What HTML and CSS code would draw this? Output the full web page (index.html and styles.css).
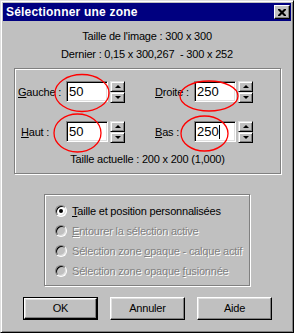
FILE: index.html
```html
<!DOCTYPE html>
<html lang="fr">
<head>
<meta charset="utf-8">
<title>Sélectionner une zone</title>
<link rel="stylesheet" href="styles.css">
</head>
<body>
<div class="window">
  <div class="titlebar">
    <span class="title">Sélectionner une zone</span>
    <span class="close"><svg width="8" height="7" viewBox="0 0 8 7"><path d="M0 0h2l2 2 2-2h2v1L5.5 3.5 8 6v1H6L4 5 2 7H0V6l2.5-2.5L0 1z" fill="#000"/></svg></span>
  </div>
  <div class="info first">Taille de l'image : 300 x 300</div>
  <div class="info second">Dernier : 0,15 x 300,267&nbsp; - 300 x 252</div>

  <div class="group group-size">
    <div class="fields">
      <div class="field">
        <span class="label label-w1"><u>G</u>auche :</span>
        <span class="edit">50</span>
        <span class="spin"><span class="sbtn"><i class="up"></i></span><span class="sbtn"><i class="down"></i></span></span>
      </div>
      <div class="field">
        <span class="label label-w2"><u>D</u>roite :</span>
        <span class="edit">250</span>
        <span class="spin"><span class="sbtn"><i class="up"></i></span><span class="sbtn"><i class="down"></i></span></span>
      </div>
      <div class="field">
        <span class="label label-w1 indent"><u>H</u>aut :</span>
        <span class="edit">50</span>
        <span class="spin"><span class="sbtn"><i class="up"></i></span><span class="sbtn"><i class="down"></i></span></span>
      </div>
      <div class="field">
        <span class="label label-w2"><u>B</u>as :</span>
        <span class="edit">250<span class="caret"></span></span>
        <span class="spin"><span class="sbtn"><i class="up"></i></span><span class="sbtn"><i class="down"></i></span></span>
      </div>
    </div>
    <div class="current">Taille actuelle : 200 x 200 (1,000)</div>
  </div>

  <div class="group group-mode">
    <div class="radio-row"><span class="radio checked"></span><span><u>T</u>aille et position personnalisées</span></div>
    <div class="radio-row disabled"><span class="radio"></span><span><u>E</u>ntourer la sélection active</span></div>
    <div class="radio-row disabled"><span class="radio"></span><span>Sélection zone <u>o</u>paque - calque actif</span></div>
    <div class="radio-row disabled"><span class="radio"></span><span>Sélection zone opaque <u>f</u>usionnée</span></div>
  </div>

  <div class="buttons">
    <span class="button default"><span class="btn-inner">OK</span></span>
    <span class="button"><span class="btn-inner">Annuler</span></span>
    <span class="button"><span class="btn-inner">Aide</span></span>
  </div>

  <svg class="marks" width="294" height="333" viewBox="0 0 294 333">
    <ellipse cx="82" cy="93" rx="27" ry="18.5"/>
    <ellipse cx="77.5" cy="133" rx="23.5" ry="19"/>
    <ellipse cx="209" cy="96" rx="29" ry="15"/>
    <ellipse cx="204.5" cy="133.5" rx="23.5" ry="17.5"/>
  </svg>
</div>
</body>
</html>
```

FILE: styles.css
```css
html, body {
  margin: 0;
  padding: 0;
  background: #c0c0c0;
}

.window {
  position: relative;
  box-sizing: border-box;
  width: 294px;
  height: 333px;
  background: #c0c0c0;
  border: 1px solid;
  border-color: #dfdfdf #000 #000 #dfdfdf;
  box-shadow: inset 1px 1px #fff, inset -1px -1px #808080;
  padding: 2px;
  display: flex;
  flex-direction: column;
  font-family: "Liberation Sans", Arial, sans-serif;
  font-size: 11px;
  letter-spacing: -0.2px;
  color: #000;
}

.titlebar {
  height: 18px;
  background: #000080;
  display: flex;
  align-items: center;
  justify-content: space-between;
  padding: 0 1px 0 3px;
  color: #fff;
  font-weight: bold;
  font-size: 12px;
}

.title {
  letter-spacing: 0.2px;
}

.close {
  box-sizing: border-box;
  width: 16px;
  height: 14px;
  background: #c0c0c0;
  border: 1px solid;
  border-color: #fff #000 #000 #fff;
  box-shadow: inset -1px -1px #808080;
  display: flex;
  align-items: center;
  justify-content: center;
  padding-right: 1px;
}

.info {
  text-align: center;
  line-height: 13px;
}

.info.first {
  margin-top: 9px;
}

.info.second {
  margin-top: 5px;
}

.group {
  border: 1px solid #808080;
  box-shadow: inset 1px 1px #fff, 1px 1px #fff;
}

.group-size {
  width: 267px;
  box-sizing: border-box;
  margin: 7px 0 0 11px;
  padding: 12px 0 7px 3px;
}

.fields {
  display: grid;
  grid-template-columns: auto auto;
  justify-content: start;
  column-gap: 30px;
  row-gap: 18px;
}

.field {
  display: flex;
  align-items: flex-start;
  height: 22px;
}

.label {
  align-self: center;
  line-height: 13px;
  white-space: nowrap;
}

.label-w1 {
  width: 48px;
}

.label-w2 {
  width: 39px;
}

.indent {
  box-sizing: border-box;
  padding-left: 3px;
}

.edit {
  box-sizing: border-box;
  width: 42px;
  height: 21px;
  background: #fff;
  border: 1px solid;
  border-color: #808080 #fff #fff #808080;
  box-shadow: inset 1px 1px #000, inset -1px -1px #dfdfdf;
  padding: 2px 0 0 2px;
  font-size: 13px;
  letter-spacing: 0;
  line-height: 15px;
  display: flex;
  align-items: flex-start;
}

.caret {
  display: inline-block;
  width: 1px;
  height: 14px;
  background: #000;
  margin-top: 1px;
}

.spin {
  margin-left: 2px;
  width: 15px;
  height: 22px;
  display: flex;
  flex-direction: column;
}

.sbtn {
  box-sizing: border-box;
  height: 11px;
  background: #c0c0c0;
  border: 1px solid;
  border-color: #dfdfdf #000 #000 #dfdfdf;
  box-shadow: inset 1px 1px #fff, inset -1px -1px #808080;
  display: flex;
  align-items: center;
  justify-content: center;
}

.sbtn i {
  display: block;
  width: 0;
  height: 0;
  border-left: 3px solid transparent;
  border-right: 3px solid transparent;
}

.sbtn .up {
  border-bottom: 3px solid #000;
}

.sbtn .down {
  border-top: 3px solid #000;
}

.current {
  margin-top: 10px;
  line-height: 13px;
  text-align: center;
  padding-right: 3px;
}

.group-mode {
  width: 206px;
  box-sizing: border-box;
  margin: 20px 0 0 41px;
  padding: 6px 0 4px 10px;
}

.radio-row {
  height: 20px;
  display: flex;
  align-items: center;
  gap: 5px;
  line-height: 13px;
  white-space: nowrap;
}

.radio {
  box-sizing: border-box;
  width: 12px;
  height: 12px;
  border-radius: 50%;
  border: 1px solid;
  border-color: #808080 #fff #fff #808080;
  box-shadow: inset 1px 1px #000, inset -1px -1px #dfdfdf;
  background: #fff;
  display: flex;
  align-items: center;
  justify-content: center;
  flex: none;
}

.radio.checked::after {
  content: "";
  width: 4px;
  height: 4px;
  border-radius: 50%;
  background: #000;
}

.disabled {
  color: #808080;
  text-shadow: 1px 1px 0 #fff;
}

.disabled .radio {
  background: #c0c0c0;
}

.buttons {
  margin: 11px 0 0 20px;
  display: flex;
  gap: 12px;
}

.button {
  box-sizing: border-box;
  width: 75px;
  height: 23px;
  display: flex;
}

.btn-inner {
  flex: 1;
  box-sizing: border-box;
  background: #c0c0c0;
  border: 1px solid;
  border-color: #fff #000 #000 #fff;
  box-shadow: inset -1px -1px #808080, inset 1px 1px #dfdfdf;
  display: flex;
  align-items: center;
  justify-content: center;
  line-height: 13px;
}

.button.default {
  border: 1px solid #000;
}

.marks {
  position: absolute;
  left: -1px;
  top: -1px;
  pointer-events: none;
}

.marks ellipse {
  fill: none;
  stroke: #ff0000;
  stroke-width: 1.3;
}
```
